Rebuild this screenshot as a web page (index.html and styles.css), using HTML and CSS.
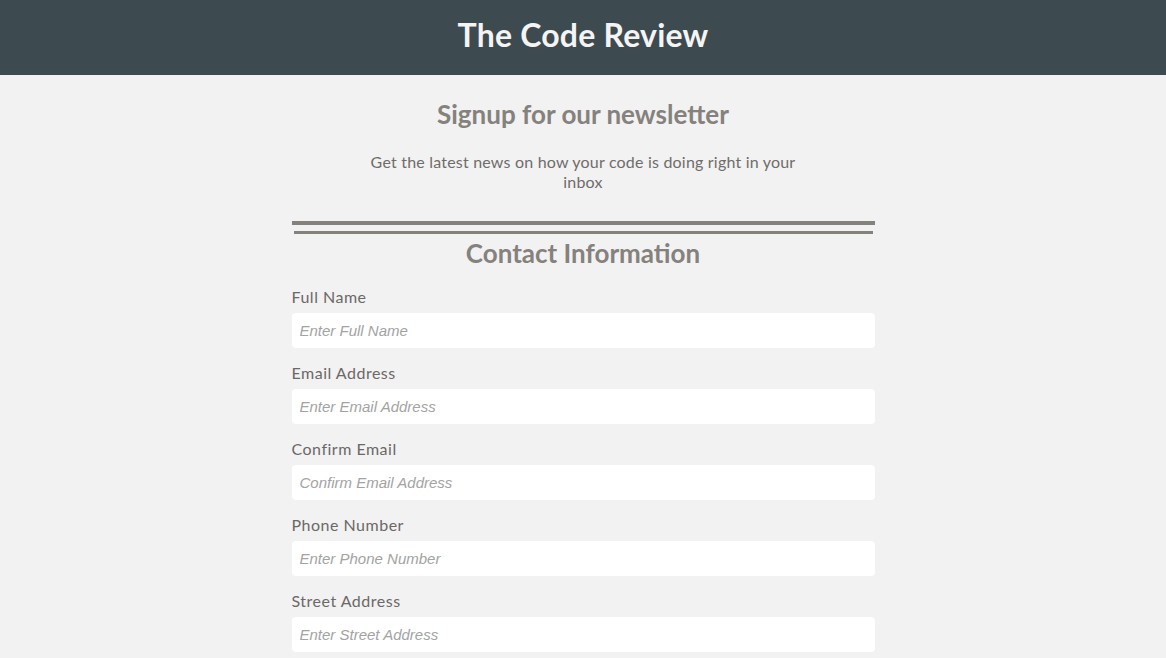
FILE: index.html
```html
<!DOCTYPE html>
<html lang="en">
<head>
<meta charset="utf-8">
<title>The Code Review</title>
<link rel="stylesheet" href="styles.css">
</head>
<body>
<header class="site-header">
  <h1 class="site-title">The Code Review</h1>
</header>
<main class="content">
  <h2 class="intro-title">Signup for our newsletter</h2>
  <p class="intro-text">Get the latest news on how your code is doing right in your inbox</p>
  <form class="signup-form">
    <div class="rule rule-top"></div>
    <div class="rule rule-bottom"></div>
    <h2 class="section-title">Contact Information</h2>
    <div class="field">
      <label class="field-label" for="name">Full Name</label>
      <input class="field-input" id="name" type="text" placeholder="Enter Full Name">
    </div>
    <div class="field">
      <label class="field-label" for="email">Email Address</label>
      <input class="field-input" id="email" type="email" placeholder="Enter Email Address">
    </div>
    <div class="field">
      <label class="field-label" for="confirm">Confirm Email</label>
      <input class="field-input" id="confirm" type="email" placeholder="Confirm Email Address">
    </div>
    <div class="field">
      <label class="field-label" for="phone">Phone Number</label>
      <input class="field-input" id="phone" type="tel" placeholder="Enter Phone Number">
    </div>
    <div class="field">
      <label class="field-label" for="street">Street Address</label>
      <input class="field-input" id="street" type="text" placeholder="Enter Street Address">
    </div>
  </form>
</main>
</body>
</html>
```

FILE: styles.css
```css
* { box-sizing: border-box; }

html, body {
  margin: 0;
  padding: 0;
}

body {
  background: #f2f2f2;
  font-family: "Lato", "Open Sans", sans-serif;
  color: #6b6b6b;
}

.site-header {
  background: #3d4a4f;
  height: 75px;
  display: flex;
  align-items: center;
  justify-content: center;
  padding-bottom: 6px;
}

.site-title {
  margin: 0;
  color: #f4f4f4;
  font-size: 32px;
  line-height: 40px;
  font-weight: 700;
  letter-spacing: 0.2px;
}

.content {
  width: 583px;
  margin: 0 auto;
  padding-top: 24px;
}

.intro-title {
  margin: 0;
  text-align: center;
  color: #85817c;
  font-size: 26px;
  font-weight: 700;
  line-height: 30px;
}

.intro-text {
  width: 440px;
  margin: 23px auto 0;
  text-align: center;
  font-size: 16px;
  letter-spacing: 0.2px;
  line-height: 20px;
  color: #6f6c69;
}

.signup-form {
  margin-top: 29px;
}

.rule {
  background: #85817c;
}

.rule-top {
  height: 4px;
}

.rule-bottom {
  height: 3px;
  margin: 6px 2px 0;
}

.section-title {
  margin: 3px 0 0;
  text-align: center;
  color: #85817c;
  font-size: 26px;
  font-weight: 700;
  line-height: 32px;
}

.field {
  margin-top: 19px;
}

.field + .field {
  margin-top: 16px;
}

.field-label {
  display: block;
  font-size: 16px;
  letter-spacing: 0.5px;
  line-height: 18px;
  color: #6b6866;
  margin-bottom: 7px;
}

.field-input {
  display: block;
  width: 100%;
  height: 35px;
  border: none;
  border-radius: 4px;
  background: #ffffff;
  padding: 0 8px;
  font-family: "Liberation Sans", Arial, sans-serif;
  font-size: 15px;
  color: #555;
  outline: none;
}

.field-input::placeholder {
  font-style: italic;
  color: #a3a3a3;
}
```
